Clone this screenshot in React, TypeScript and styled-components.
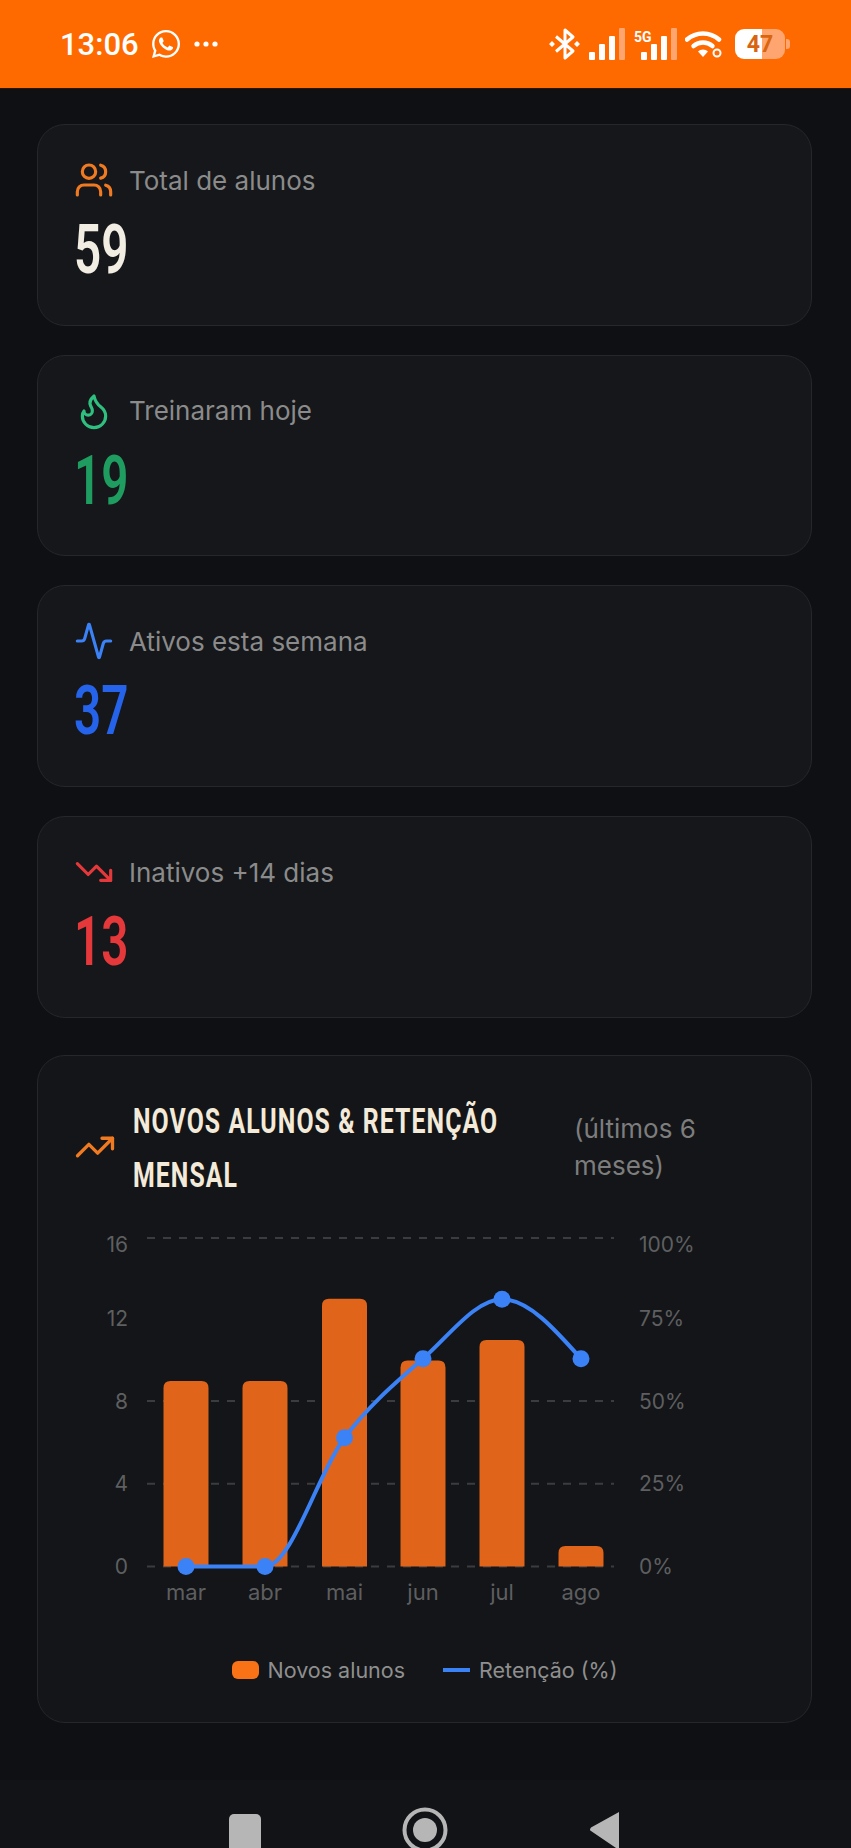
import { createGlobalStyle } from "styled-components";
import styled from "styled-components";
import { Activity, TrendingDown, TrendingUp, Users } from "lucide-react";
import { FaWhatsapp } from "react-icons/fa";
import { ReactNode } from "react";

const GlobalStyle = createGlobalStyle`
  html, body {
    margin: 0;
    padding: 0;
    background: #0e1013;
  }
  * {
    box-sizing: border-box;
  }
`;

const labelFont = `"Inter", "Noto Sans", sans-serif`;
const condensedFont = `"Roboto", sans-serif`;

const Page = styled.div`
  width: 851px;
  height: 1848px;
  overflow: hidden;
  display: flex;
  flex-direction: column;
  background: #0e1013;
  font-family: ${labelFont};
`;

const StatusBar = styled.div`
  height: 89px;
  flex-shrink: 0;
  display: flex;
  align-items: center;
  justify-content: space-between;
  padding: 0 66px 0 60px;
  background: #ff6a00;
  border-bottom: 1px solid #2b1605;
  color: #fff;
`;

const StatusLeft = styled.div`
  display: flex;
  align-items: center;
  gap: 11px;
`;

const Clock = styled.span`
  font-family: "Roboto", sans-serif;
  font-size: 31px;
  font-weight: 500;
`;

const StatusRight = styled.div`
  display: flex;
  align-items: center;
  gap: 8px;
`;

const Battery = styled.div`
  position: relative;
  width: 50px;
  height: 30px;
  display: flex;
  align-items: center;
  justify-content: center;
  border-radius: 9px;
  margin-left: 4px;
  background: linear-gradient(90deg, #fff 0 27px, #ffa570 27px 100%);
  color: #d9650f;
  font-family: "Roboto", sans-serif;
  font-size: 23px;
  font-weight: 700;
  &::after {
    content: "";
    position: absolute;
    right: -5px;
    top: 10px;
    width: 4px;
    height: 10px;
    border-radius: 0 3px 3px 0;
    background: #ffa570;
  }
`;

const Main = styled.main`
  flex: 1;
  display: flex;
  flex-direction: column;
  gap: 29px;
  padding: 35px 39px 0 37px;
`;

const StatCard = styled.section`
  height: 201.7px;
  padding: 35px 36px 0;
  border: 1px solid #25272a;
  border-radius: 28px;
  background: #15171a;
`;

const StatHeader = styled.div`
  display: flex;
  align-items: center;
  gap: 15px;
  height: 40px;
`;

const StatLabel = styled.span`
  color: #8b8b8b;
  font-size: 26px;
`;

const StatValue = styled.div<{ $color: string }>`
  margin-top: 13px;
  color: ${(p) => p.$color};
  font-family: ${condensedFont};
  font-size: 68px;
  font-weight: 600;
  line-height: 74px;
  transform: scaleX(0.7);
  transform-origin: left center;
`;

const ChartCard = styled.section`
  height: 668px;
  margin-top: 8px;
  padding: 37px 36px 0;
  border: 1px solid #25272a;
  border-radius: 28px;
  background: #131518;
`;

const ChartHeader = styled.header`
  display: flex;
  align-items: center;
  height: 108px;
  gap: 17px;
`;

const ChartTitle = styled.h2`
  width: 424px;
  flex-shrink: 0;
  margin: 4px 0 0;
`;

const ChartTitleText = styled.span`
  display: block;
  width: 560px;
  color: #f3ead9;
  font-family: ${condensedFont};
  font-size: 35px;
  font-weight: 700;
  line-height: 54px;
  letter-spacing: 1.5px;
  transform: scaleX(0.71);
  transform-origin: left center;
`;

const ChartRange = styled.span`
  width: 140px;
  color: #7d7d7d;
  font-size: 26px;
  line-height: 37px;
`;

const Plot = styled.svg`
  display: block;
  margin: 19px 0 0 -2px;
`;

const AxisText = styled.text<{ $size?: number }>`
  fill: #5e5f60;
  font-family: ${labelFont};
  font-size: ${(p) => p.$size ?? 21}px;
`;

const Legend = styled.div`
  display: flex;
  justify-content: center;
  align-items: center;
  gap: 9px;
  height: 30px;
  margin: 35px 0 0 0;
  color: #8f8f8f;
  font-size: 21.5px;
`;

const LegendBox = styled.i`
  width: 27px;
  height: 18px;
  border-radius: 6px;
  background: #f97316;
`;

const LegendLine = styled.i`
  width: 27px;
  height: 4px;
  margin-left: 29px;
  background: #3b82f6;
`;

const NavBar = styled.nav`
  height: 68px;
  flex-shrink: 0;
  display: flex;
  gap: 141px;
  padding: 20px 0 0 229px;
  background: #111316;
`;

const months = ["mar", "abr", "mai", "jun", "jul", "ago"];
const novos = [9, 9, 13, 10, 11, 1];
const centers = [186, 265, 344.5, 423, 502, 581];
const lineY = [1566.5, 1566.5, 1437.7, 1358.7, 1299.3, 1358.7];

// plot coordinates are page coordinates moved by this offset
const originY = 1220;
const zeroY = 1566.5 - originY;
const unit = 20.6;

// same idea as d3 curveMonotoneX, recharts draws its line with it
function monotonePath(xs: number[], ys: number[]) {
  const n = xs.length;
  const h = xs.slice(1).map((x, i) => x - xs[i]);
  const s = ys.slice(1).map((y, i) => (y - ys[i]) / h[i]);
  const t: number[] = [];
  for (let i = 1; i < n - 1; i++) {
    const p = (s[i - 1] * h[i] + s[i] * h[i - 1]) / (h[i - 1] + h[i]);
    const sign = (Math.sign(s[i - 1]) + Math.sign(s[i])) || 0;
    t[i] = sign * Math.min(Math.abs(s[i - 1]), Math.abs(s[i]), 0.5 * Math.abs(p));
  }
  t[0] = (3 * s[0] - t[1]) / 2;
  t[n - 1] = (3 * s[n - 2] - t[n - 2]) / 2;
  let d = `M${xs[0]},${ys[0]}`;
  for (let i = 0; i < n - 1; i++) {
    const dx = h[i] / 3;
    d += `C${xs[i] + dx},${ys[i] + dx * t[i]} ${xs[i + 1] - dx},${ys[i + 1] - dx * t[i + 1]} ${xs[i + 1]},${ys[i + 1]}`;
  }
  return d;
}

function Bar({ cx, value }: { cx: number; value: number }) {
  const top = zeroY - value * unit;
  const r = 7;
  const l = cx - 22.5;
  const w = 45;
  return (
    <path
      d={`M${l},${zeroY}V${top + r}Q${l},${top} ${l + r},${top}H${l + w - r}Q${l + w},${top} ${l + w},${top + r}V${zeroY}Z`}
      fill="#e0641a"
    />
  );
}

function Chart() {
  const ys = lineY.map((y) => y - originY);
  return (
    <Plot width={700} height={400} viewBox="72 0 700 400" role="img">
      {[1238, 1401, 1483.7, 1566.5].map((y) => (
        <line
          key={y}
          x1={147}
          x2={614}
          y1={y - originY}
          y2={y - originY}
          stroke="#3b3c3e"
          strokeWidth={2}
          strokeDasharray="8 8"
        />
      ))}
      {[
        ["16", 1245],
        ["12", 1319],
        ["8", 1402],
        ["4", 1484],
        ["0", 1567],
      ].map(([t, y]) => (
        <AxisText key={t} x={128} y={Number(y) - originY + 7} textAnchor="end">
          {t}
        </AxisText>
      ))}
      {[
        ["100%", 1245],
        ["75%", 1319],
        ["50%", 1402],
        ["25%", 1484],
        ["0%", 1567],
      ].map(([t, y]) => (
        <AxisText key={t} x={639} y={Number(y) - originY + 7}>
          {t}
        </AxisText>
      ))}
      {novos.map((v, i) => (
        <Bar key={months[i]} cx={centers[i]} value={v} />
      ))}
      <path d={monotonePath(centers, ys)} fill="none" stroke="#3b82f6" strokeWidth={4} />
      {centers.map((x, i) => (
        <circle key={x} cx={x} cy={ys[i]} r={8.5} fill="#3b82f6" />
      ))}
      {months.map((m, i) => (
        <AxisText key={m} x={centers[i]} y={1600 - originY} textAnchor="middle" $size={22}>
          {m}
        </AxisText>
      ))}
    </Plot>
  );
}

function Stat({ icon, label, value, color }: { icon: ReactNode; label: string; value: number; color: string }) {
  return (
    <StatCard>
      <StatHeader>
        {icon}
        <StatLabel>{label}</StatLabel>
      </StatHeader>
      <StatValue $color={color}>{value}</StatValue>
    </StatCard>
  );
}

function Signal({ label }: { label?: string }) {
  return (
    <svg width={label ? 44 : 36} height={34} viewBox={`${label ? -8 : 0} 0 ${label ? 44 : 36} 34`}>
      {[8, 16, 24].map((h, i) => (
        <rect key={h} x={i * 10} y={33 - h} width={6} height={h} rx={1} fill="#fff" />
      ))}
      <rect x={30} y={1} width={6} height={32} rx={1} fill="#ffa570" />
      {label && (
        <text x={-7} y={15} fontFamily="Roboto, sans-serif" fontSize={14} fontWeight={700} fill="#fff">
          {label}
        </text>
      )}
    </svg>
  );
}

// the older flame outline, the one the reference draws
function FlameIcon() {
  return (
    <svg width={40} height={40} viewBox="0 0 24 24" fill="none" stroke="#2fbf7f" strokeWidth={1.9} strokeLinecap="round" strokeLinejoin="round">
      <path d="M8.5 14.500A2.500 2.500 0 0 0 11 12c0-1.380-.5-2-1-3-1.072-2.143-.224-4.054 2-6 .5 2.500 2 4.900 4 6.500 2 1.600 3 3.500 3 5.500a7 7 0 1 1-14 0c0-1.153.433-2.294 1-3a2.500 2.500 0 0 0 2.500 2.500z" />
    </svg>
  );
}

export default function App() {
  const stroke = 1.9;
  return (
    <Page>
      <GlobalStyle />
      <StatusBar>
        <StatusLeft>
          <Clock>13:06</Clock>
          <FaWhatsapp size={32} />
          <svg width={26} height={8} viewBox="0 0 26 8">
            <circle cx={4} cy={4} r={2.6} fill="#fff" />
            <circle cx={13} cy={4} r={2.6} fill="#fff" />
            <circle cx={22} cy={4} r={2.6} fill="#fff" />
          </svg>
        </StatusLeft>
        <StatusRight>
          <svg width={32} height={34} viewBox="0 0 32 34">
            <path
              d="M7 9.500 24 24 16 31V3l8 7L7 24.500"
              fill="none"
              stroke="#fff"
              strokeWidth={3}
              strokeLinejoin="round"
            />
            <path d="M3 14l3 3-3 3-3-3zM28 14l3 3-3 3-3-3z" fill="#fff" />
          </svg>
          <Signal />
          <Signal label="5G" />
          <svg width={38} height={28} viewBox="0 0 38 28">
            <path d="M2 9.500a24 24 0 0 1 32 0" fill="none" stroke="#fff" strokeWidth={4.5} strokeLinecap="round" />
            <path d="M8.500 16a15 15 0 0 1 19 0" fill="none" stroke="#fff" strokeWidth={4.5} strokeLinecap="round" />
            <path d="M18 27l-5-5.500a7 7 0 0 1 10 0z" fill="#fff" />
            <circle cx={32} cy={23} r={3.5} fill="none" stroke="#fff" strokeWidth={2} />
          </svg>
          <Battery>47</Battery>
        </StatusRight>
      </StatusBar>
      <Main>
        <Stat
          icon={<Users size={40} color="#f07a22" strokeWidth={stroke} />}
          label="Total de alunos"
          value={59}
          color="#f1ede2"
        />
        <Stat icon={<FlameIcon />} label="Treinaram hoje" value={19} color="#1f9d61" />
        <Stat
          icon={<Activity size={40} color="#3b82f6" strokeWidth={stroke} />}
          label="Ativos esta semana"
          value={37}
          color="#2563eb"
        />
        <Stat
          icon={<TrendingDown size={40} color="#e5383b" strokeWidth={stroke} />}
          label="Inativos +14 dias"
          value={13}
          color="#e5383b"
        />
        <ChartCard>
          <ChartHeader>
            <TrendingUp size={42} color="#f07a22" strokeWidth={stroke} />
            <ChartTitle>
              <ChartTitleText>NOVOS ALUNOS &amp; RETENÇÃO MENSAL</ChartTitleText>
            </ChartTitle>
            <ChartRange>(últimos 6 meses)</ChartRange>
          </ChartHeader>
          <Chart />
          <Legend>
            <LegendBox />
            <span>Novos alunos</span>
            <LegendLine />
            <span>Retenção (%)</span>
          </Legend>
        </ChartCard>
      </Main>
      <NavBar>
        <svg width={32} height={48}>
          <rect x={0} y={14} width={32} height={40} rx={5} fill="#b6b6b6" />
        </svg>
        <svg width={46} height={48}>
          <circle cx={23} cy={30} r={20.5} fill="none" stroke="#b6b6b6" strokeWidth={4} />
          <circle cx={23} cy={30} r={12} fill="#b6b6b6" />
        </svg>
        <svg width={30} height={48}>
          <path d="M30 12v38L2 31q-2-1 0-3.500z" fill="#b6b6b6" />
        </svg>
      </NavBar>
    </Page>
  );
}
